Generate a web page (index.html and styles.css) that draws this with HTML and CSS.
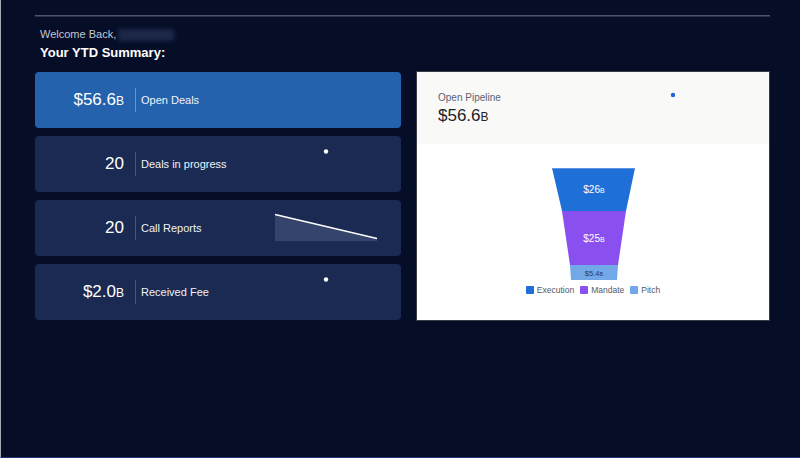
FILE: index.html
```html
<!DOCTYPE html>
<html>
<head>
<meta charset="utf-8">
<link rel="stylesheet" href="styles.css">
</head>
<body>
<div class="page">
  <div class="rule"></div>
  <div class="greeting">
    <div class="welcome">Welcome Back, <span class="name-blur"></span></div>
    <div class="title">Your YTD Summary:</div>
  </div>
  <div class="grid">
    <div class="cards">
      <div class="card card-primary">
        <div class="value">$56.6<span class="unit">B</span></div>
        <div class="divider"></div>
        <div class="label">Open Deals</div>
      </div>
      <div class="card">
        <div class="value">20</div>
        <div class="divider"></div>
        <div class="label">Deals in progress</div>
        <svg class="spark" width="102" height="28" viewBox="0 0 102 28"><circle cx="51" cy="1.5" r="2.2" fill="#ffffff"/></svg>
      </div>
      <div class="card">
        <div class="value">20</div>
        <div class="divider"></div>
        <div class="label">Call Reports</div>
        <svg class="spark" width="102" height="28" viewBox="0 0 102 28">
          <polygon points="0,0 102,24 102,27 0,27" fill="#34446c"/>
          <line x1="0" y1="0.5" x2="102" y2="24.5" stroke="#ffffff" stroke-width="1.3"/>
        </svg>
      </div>
      <div class="card">
        <div class="value">$2.0<span class="unit">B</span></div>
        <div class="divider"></div>
        <div class="label">Received Fee</div>
        <svg class="spark" width="102" height="28" viewBox="0 0 102 28"><circle cx="51" cy="1.5" r="2.2" fill="#ffffff"/></svg>
      </div>
    </div>
    <div class="pipeline">
      <div class="pipe-head">
        <div class="pipe-text">
          <div class="pipe-label">Open Pipeline</div>
          <div class="pipe-value">$56.6<span class="unit">B</span></div>
        </div>
        <svg class="pipe-spark" width="100" height="30" viewBox="0 0 100 30"><circle cx="50" cy="2" r="2.2" fill="#1f66d6"/></svg>
      </div>
      <div class="pipe-body">
        <svg class="funnel" width="83" height="112" viewBox="0 0 83 112">
          <polygon points="0,0 83,0 74,43 10,43" fill="#1f6fd8"/>
          <polygon points="10,43 74,43 66,97 18,97" fill="#8a50ef"/>
          <polygon points="18,97 66,97 65,112 19,112" fill="#72a8e8"/>
          <line x1="0" y1="0.3" x2="83" y2="0.3" stroke="#9fc2f0" stroke-width="0.6"/>
          <text x="42" y="24.5" class="f-big" text-anchor="middle">$26<tspan class="f-unit">B</tspan></text>
          <text x="42" y="73.5" class="f-big" text-anchor="middle">$25<tspan class="f-unit">B</tspan></text>
          <text x="42" y="107.5" class="f-small" text-anchor="middle">$5.4<tspan class="f-sunit">B</tspan></text>
        </svg>
        <div class="legend">
          <span class="leg"><span class="sw sw-exec"></span>Execution</span>
          <span class="leg"><span class="sw sw-mand"></span>Mandate</span>
          <span class="leg"><span class="sw sw-pitch"></span>Pitch</span>
        </div>
      </div>
    </div>
  </div>
</div>
</body>
</html>
```
FILE: styles.css
```css
html, body {
  margin: 0;
  padding: 0;
}
body {
  width: 800px;
  height: 458px;
  box-sizing: border-box;
  background: #060e27;
  border-left: 1px solid #a4a8b0;
  border-bottom: 1px solid #24357a;
  font-family: "Liberation Sans", Arial, sans-serif;
  overflow: hidden;
}
.page {
  padding: 15px 30px 0 34px;
}
.rule {
  height: 1px;
  background: #4c5672;
  border-bottom: 1px solid #2a334e;
}
.greeting {
  padding: 11px 0 0 5px;
}
.welcome {
  font-size: 11px;
  color: #c3c8d4;
  line-height: 13px;
  display: flex;
  align-items: center;
  gap: 2px;
}
.name-blur {
  display: inline-block;
  width: 56px;
  height: 12px;
  background: #1c2848;
  filter: blur(2px);
}
.title {
  margin-top: 4px;
  font-size: 13px;
  font-weight: bold;
  color: #ffffff;
  line-height: 15px;
}
.grid {
  margin-top: 11px;
  display: flex;
  gap: 15px;
}
.cards {
  width: 366px;
  display: flex;
  flex-direction: column;
  gap: 8px;
  padding-top: 1px;
}
.card {
  height: 56px;
  border-radius: 4px;
  background: #1a2a52;
  display: flex;
  align-items: center;
  color: #ffffff;
}
.card-primary {
  background: #2462ae;
}
.value {
  width: 89px;
  text-align: right;
  font-size: 17px;
  color: #ffffff;
}
.unit {
  font-size: 12px;
}
.divider {
  width: 1px;
  height: 24px;
  background: rgba(140, 170, 220, 0.35);
  margin: 0 5px 0 11px;
}
.card-primary .divider {
  background: rgba(150, 190, 240, 0.55);
}
.label {
  flex: 1;
  font-size: 11px;
  color: #f0f2f6;
}
.spark {
  margin-right: 24px;
  display: block;
  overflow: visible;
}
.pipeline {
  width: 352px;
  height: 248px;
  border: 1px solid #3a3d44;
  background: #ffffff;
  display: flex;
  flex-direction: column;
}
.pipe-head {
  height: 72px;
  background: #f9f9f7;
  display: flex;
  padding-left: 21px;
}
.pipe-text {
  flex: 1;
  padding-top: 20px;
}
.pipe-label {
  font-size: 10px;
  color: #5b6272;
  line-height: 12px;
}
.pipe-value {
  margin-top: 2px;
  font-size: 17px;
  color: #1e2128;
  line-height: 20px;
}
.pipe-value .unit {
  font-size: 12px;
}
.pipe-spark {
  margin: 21px 46px 0 0;
  display: block;
  overflow: visible;
}
.pipe-body {
  flex: 1;
  display: flex;
  flex-direction: column;
  align-items: center;
  padding-top: 24px;
}
.funnel {
  display: block;
}
.f-big {
  font-family: "Liberation Sans", Arial, sans-serif;
  font-size: 10px;
  fill: #ffffff;
}
.f-unit {
  font-size: 7px;
}
.f-small {
  font-family: "Liberation Sans", Arial, sans-serif;
  font-size: 7.5px;
  fill: #2b3a5a;
}
.f-sunit {
  font-size: 5.5px;
}
.legend {
  margin-top: 5px;
  display: flex;
  gap: 6px;
  font-size: 8.5px;
  color: #555a66;
}
.leg {
  display: flex;
  align-items: center;
  gap: 3px;
}
.sw {
  width: 8px;
  height: 8px;
  border-radius: 1px;
  display: inline-block;
}
.sw-exec { background: #1f6fd8; }
.sw-mand { background: #8a50ef; }
.sw-pitch { background: #72a8e8; }
```
